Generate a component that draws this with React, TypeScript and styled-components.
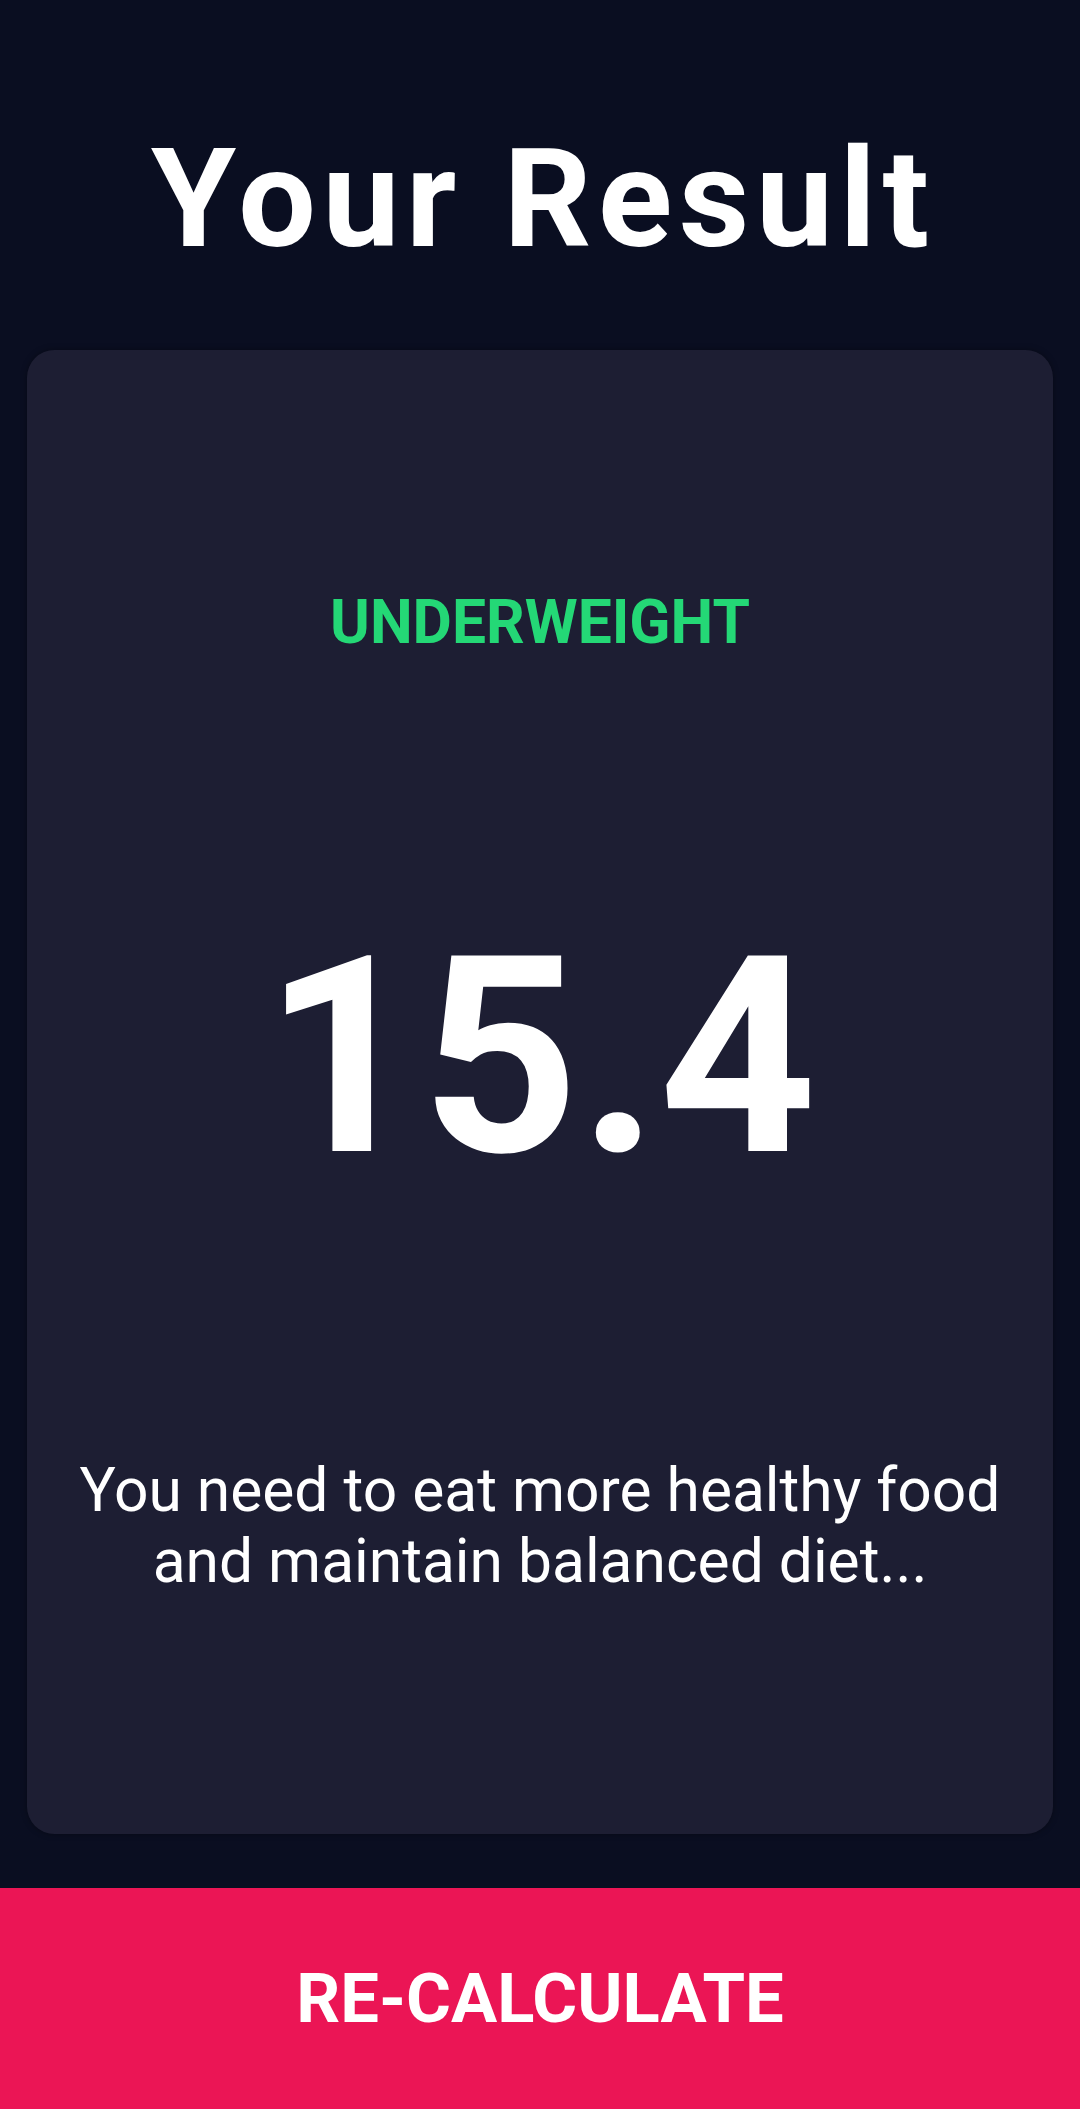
import React from "react";
import styled, { createGlobalStyle } from "styled-components";

const GlobalStyle = createGlobalStyle`
  html, body {
    margin: 0;
    padding: 0;
    background: #0a0e21;
  }
  * { box-sizing: border-box; }
`;

const Page = styled.div`
  width: 100%;
  height: 2109px;
  display: flex;
  flex-direction: column;
  background: #0a0e21;
  font-family: Roboto, "Noto Sans", sans-serif;
  color: #ffffff;
`;

const Header = styled.header`
  height: 350px;
  padding-top: 118px;
  display: flex;
  justify-content: center;
  align-items: flex-start;
`;

const Title = styled.h1`
  margin: 0 -6.5px 0 0;
  font-size: 137.5px;
  font-weight: 700;
  letter-spacing: 6.5px;
  line-height: normal;
`;

const Card = styled.section`
  margin: 0 27px;
  height: 1484px;
  border-radius: 27.5px;
  background: #1d1e33;
  box-shadow: 0 0 6px rgba(0, 0, 0, 0.35);
  display: flex;
  flex-direction: column;
  justify-content: space-evenly;
  align-items: center;
`;

const Status = styled.div<{ $color: string }>`
  font-size: 60.5px;
  font-weight: 700;
  line-height: normal;
  color: ${(p) => p.$color};
`;

const Value = styled.div`
  font-size: 275px;
  font-weight: 700;
  line-height: normal;
`;

const Advice = styled.p`
  margin: 0;
  padding: 0 30px;
  font-size: 60.5px;
  font-weight: 400;
  line-height: normal;
  text-align: center;
`;

const BottomButton = styled.button`
  margin-top: auto;
  width: 100%;
  height: 221px;
  border: none;
  background: #eb1555;
  color: #ffffff;
  font-family: Roboto, "Noto Sans", sans-serif;
  font-size: 68.75px;
  font-weight: 700;
  display: flex;
  align-items: center;
  justify-content: center;
  padding: 0;
  cursor: pointer;
`;

export default function App() {
  return (
    <Page>
      <GlobalStyle />
      <Header>
        <Title>Your Result</Title>
      </Header>
      <Card>
        <Status $color="#24d876">UNDERWEIGHT</Status>
        <Value>15.4</Value>
        <Advice>You need to eat more healthy food and maintain balanced diet...</Advice>
      </Card>
      <BottomButton>RE-CALCULATE</BottomButton>
    </Page>
  );
}
